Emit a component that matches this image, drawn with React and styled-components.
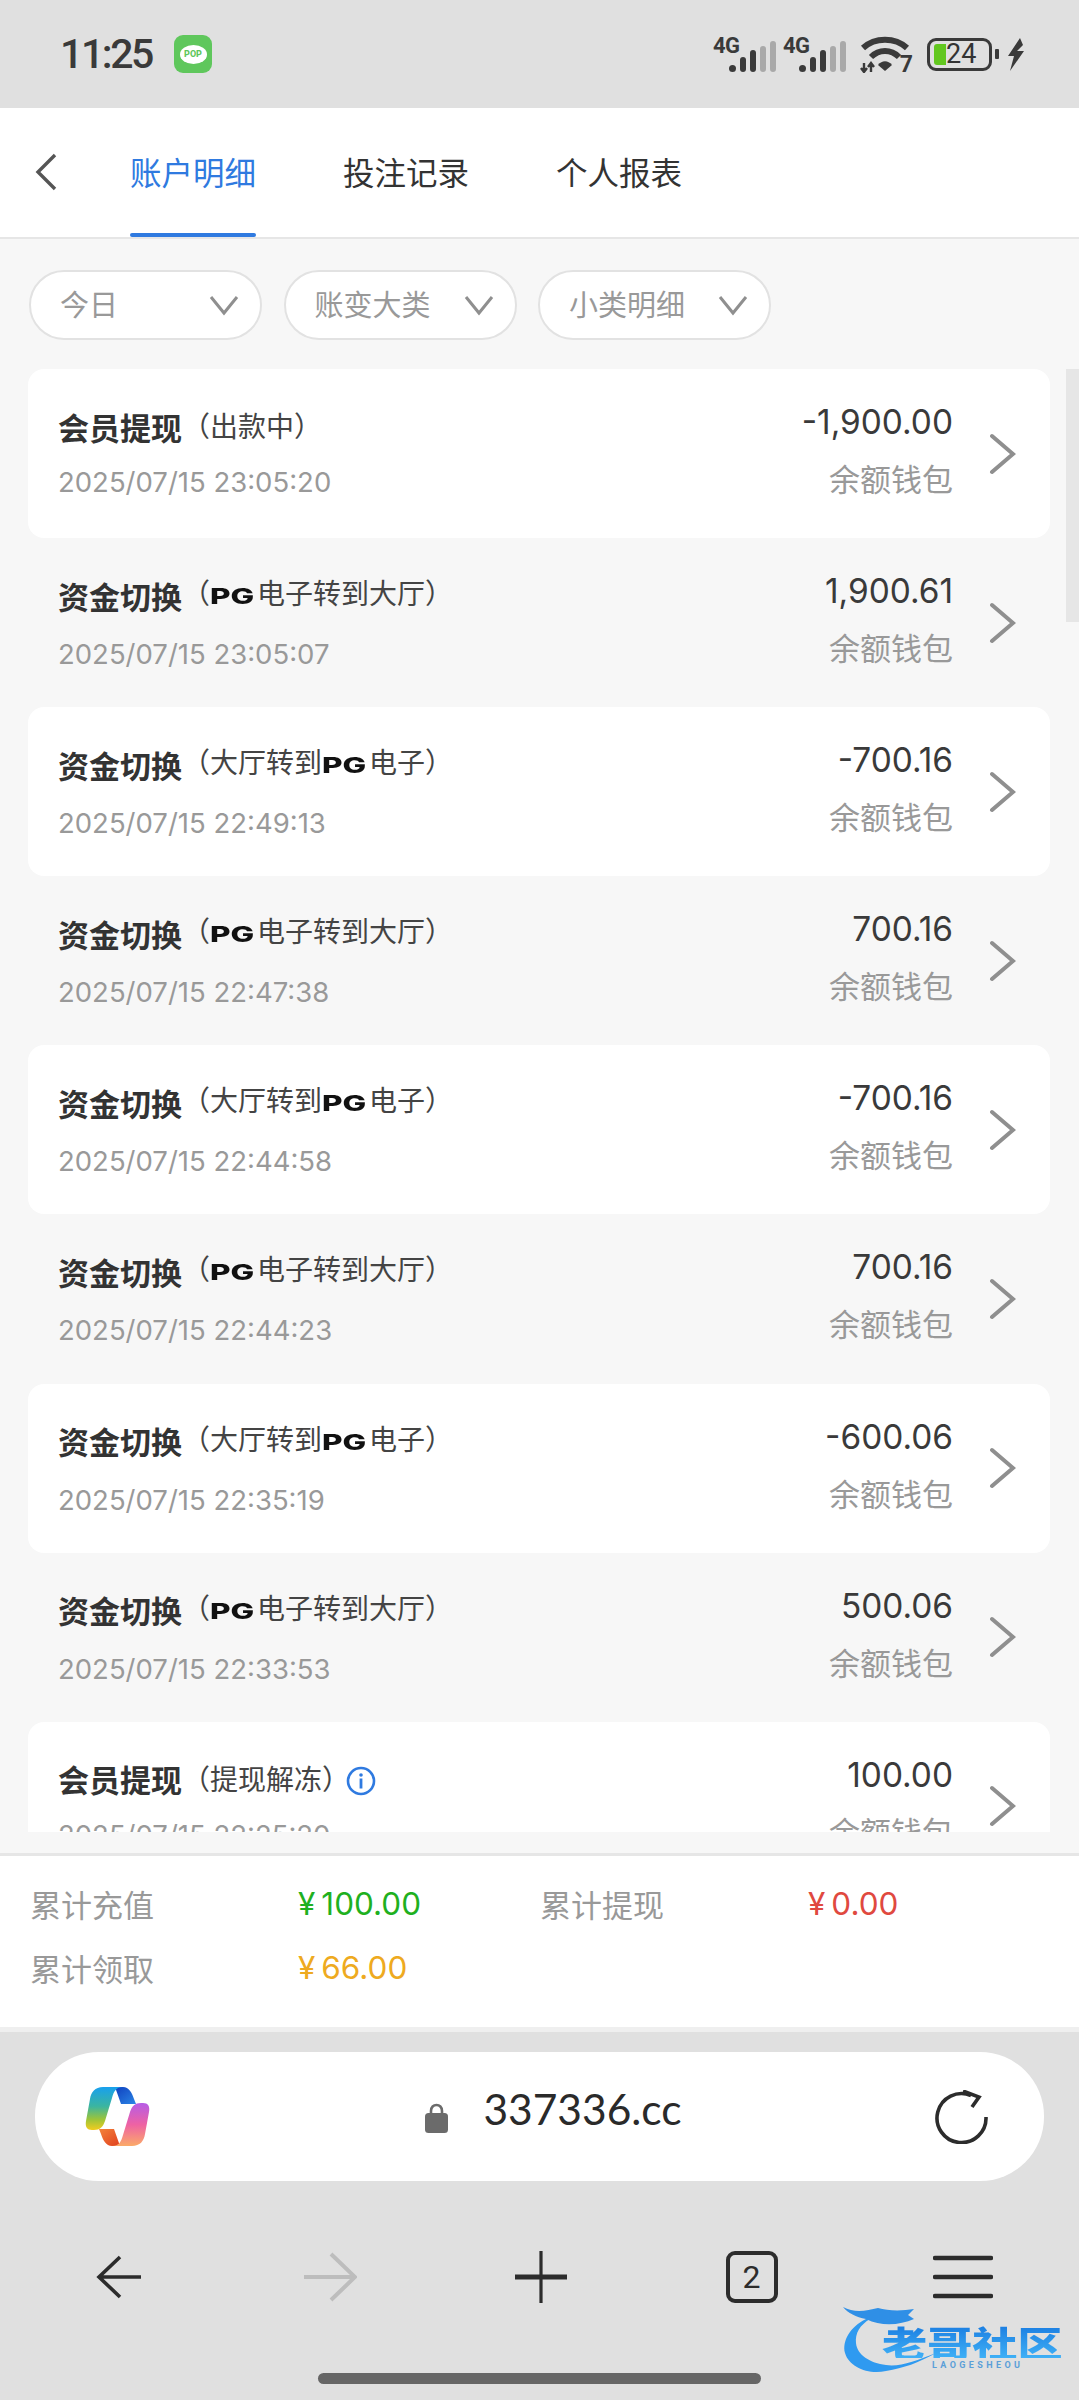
import React from "react";
import styled, { createGlobalStyle } from "styled-components";

const CJK = `"Noto Sans CJK SC", "Noto Sans", sans-serif`;
const LATIN = `Inter, "Noto Sans CJK SC", sans-serif`;

const Global = createGlobalStyle`
  html, body { margin: 0; padding: 0; background: #e0e0e0; }
  * { box-sizing: border-box; }
`;

const Screen = styled.div`
  position: relative;
  width: 1079px;
  height: 2400px;
  display: flex;
  flex-direction: column;
  overflow: hidden;
  font-family: ${CJK};
  background: #f7f7f7;
`;

/* status bar */
const StatusBar = styled.div`
  height: 108px;
  flex: none;
  background: #e0e0e0;
  display: flex;
  align-items: center;
  padding: 22px 54px 22px 60px;
  color: #3a3a3a;
`;
const Clock = styled.span`
  font-family: Roboto, sans-serif;
  font-size: 41px;
  font-weight: 500;
  width: 114px;
  letter-spacing: -2.4px;
`;
const PopBadge = styled.div`
  width: 38px;
  height: 38px;
  border-radius: 9px;
  background: #5fc75c;
  display: flex;
  align-items: center;
  justify-content: center;
  position: relative;
`;
const PopBubble = styled.span`
  width: 27px;
  height: 19px;
  border-radius: 50%;
  background: #fff;
  color: #5fc75c;
  font: 800 9px Roboto, sans-serif;
  display: flex;
  align-items: center;
  justify-content: center;
`;
const StatusIcons = styled.div`
  margin-left: auto;
  display: flex;
  align-items: center;
  height: 40px;
`;
const SignalWrap = styled.div`
  position: relative;
  width: 70px;
  height: 36px;
`;
const SignalLabel = styled.span`
  position: absolute;
  left: 0;
  top: -3px;
  font: 700 22px Roboto, sans-serif;
  letter-spacing: -0.5px;
  color: #3a3a3a;
`;
const SignalBars = styled.svg`
  position: absolute;
  right: 6px;
  bottom: 0;
`;
const WifiWrap = styled.div`
  width: 50px;
  height: 38px;
  margin-left: 7px;
  position: relative;
`;
const WifiSeven = styled.span`
  position: absolute;
  right: -3px;
  bottom: -5px;
  font: 700 23px Roboto, sans-serif;
`;
const Battery = styled.div`
  margin-left: 17px;
  width: 65px;
  height: 33px;
  border: 3px solid #3a3a3a;
  border-radius: 9px;
  display: flex;
  align-items: center;
  padding-left: 4px;
  font: 400 27px Roboto, sans-serif;
  color: #333;
  position: relative;
`;
const BatteryFill = styled.span`
  width: 12px;
  height: 21px;
  background: #62c71f;
  border-radius: 3px 0 0 3px;
  margin-right: 0;
`;
const BatteryNub = styled.span`
  width: 4px;
  height: 10px;
  margin-left: 3px;
  border-radius: 1px;
  background: #3a3a3a;
`;
const Bolt = styled.svg`
  margin-left: 8px;
`;

/* page header with tabs */
const Header = styled.header`
  flex: none;
  height: 131px;
  background: #fff;
  border-bottom: 2px solid #e6e6e6;
  display: flex;
  align-items: stretch;
  padding-left: 34px;
`;
const BackBtn = styled.svg`
  align-self: center;
  margin-top: -1px;
  margin-right: 72px;
`;
const Tab = styled.div`
  position: relative;
  margin-right: 87px;
  padding-top: 41px;
  font-size: 31.5px;
  line-height: 44px;
  color: ${(p) => (p.$active ? "#2f7ae0" : "#333")};
  &::after {
    content: "";
    display: ${(p) => (p.$active ? "block" : "none")};
    position: absolute;
    left: 0;
    right: 0;
    bottom: 0;
    height: 4px;
    border-radius: 2px;
    background: #2f7ae0;
  }
`;

/* filter pills */
const Filters = styled.div`
  flex: none;
  height: 130px;
  display: flex;
  gap: 21.5px;
  padding: 31px 0 0 29px;
`;
const Pill = styled.div`
  width: 233px;
  height: 70px;
  border: 2px solid #e2e2e2;
  border-radius: 35px;
  background: #fff;
  display: flex;
  align-items: center;
  justify-content: space-between;
  padding: 0 20px 4px 29px;
  font-size: 29px;
  color: #999;
`;
const PillCaret = styled.svg`
  margin-top: 4px;
`;

/* statement list */
const List = styled.div`
  position: relative;
  flex: 1;
  min-height: 0;
  overflow: hidden;
  margin-bottom: 21px;
`;
const Track = styled.div`
  position: absolute;
  top: 0;
  right: 0;
  width: 13px;
  height: 253px;
  background: #e6e6e6;
`;
const Row = styled.div`
  height: 169.1px;
  margin: 0 29px 0 28px;
  border-radius: 16px;
  background: ${(p) => (p.$alt ? "#fff" : "transparent")};
  display: flex;
  align-items: flex-start;
  padding: 0 34px 0 30px;
`;
const RowLeft = styled.div`
  flex: 1;
  padding-top: 36px;
`;
const TitleLine = styled.div`
  display: flex;
  align-items: center;
  height: 42px;
  white-space: nowrap;
`;
const Title = styled.span`
  font-size: 31px;
  font-weight: 700;
  color: #333;
`;
const Sub = styled.span`
  font-size: 28px;
  color: #444;
  display: inline-flex;
  align-items: center;
  margin-top: ${(p) => (p.$logo ? "-6px" : "-2px")};
`;
const PgMark = styled.span`
  display: inline-block;
  width: 45px;
  font: 800 21px/1 Inter, sans-serif;
  color: #111;
  letter-spacing: 0;
  transform: scaleX(1.5);
  transform-origin: left center;
  margin-top: 9px;
  margin-right: 2px;
  white-space: nowrap;
`;
const Info = styled.svg`
  margin-left: -4px;
  margin-top: 4px;
`;
const DateText = styled.div`
  margin-top: ${(p) => (p.$low ? "19px" : "16px")};
  font-family: ${LATIN};
  font-size: 27.5px;
  line-height: 38px;
  color: #999;
`;
const RowRight = styled.div`
  display: flex;
  flex-direction: column;
  align-items: flex-end;
  padding-top: 32px;
`;
const Amount = styled.div`
  font-family: ${LATIN};
  font-size: 33.4px;
  line-height: 42px;
  color: #3a3a3a;
`;
const Wallet = styled.div`
  margin-top: 15px;
  font-size: 31px;
  line-height: 40px;
  color: #999;
`;
const Chevron = styled.svg`
  align-self: center;
  margin-left: 35px;
`;

/* totals footer */
const Totals = styled.div`
  flex: none;
  height: 174px;
  background: #fff;
  border-top: 3px solid #e6e6e6;
  display: grid;
  grid-template-columns: 268px 242px 268px 1fr;
  grid-auto-rows: 64px;
  padding: 15px 0 0 30px;
  align-items: center;
`;
const TotalLabel = styled.span`
  font-size: 31px;
  color: #999;
`;
const TotalValue = styled.span`
  font-family: ${LATIN};
  font-size: 31.5px;
  color: ${(p) => p.$color};
`;
const Yen = styled.span`
  margin-right: 6px;
`;

/* browser chrome */
const Chrome = styled.div`
  flex: none;
  height: 373px;
  background: #e0e0e0;
  border-top: 5px solid #efefef;
  padding: 20px 35px 0;
  display: flex;
  flex-direction: column;
`;
const UrlBar = styled.div`
  position: relative;
  height: 129px;
  border-radius: 64px;
  background: #fff;
  display: flex;
  align-items: center;
  justify-content: space-between;
  padding: 0 55px 0 50px;
`;
const UrlCenter = styled.div`
  display: flex;
  align-items: flex-start;
  gap: 35px;
  margin-left: 22px;
  margin-top: -10px;
`;
const LockIcon = styled.svg`
  margin-top: 12px;
`;
const UrlText = styled.span`
  font-family: Lato, sans-serif;
  font-size: 42.5px;
  line-height: 36px;
  color: #2a2a2a;
`;
const Toolbar = styled.div`
  display: grid;
  grid-template-columns: repeat(5, 211px);
  margin: 68px 0 0 -22px;
  justify-items: center;
  align-items: center;
  height: 56px;
`;
const TabCount = styled.div`
  width: 52px;
  height: 52px;
  border: 4px solid #2c2c2c;
  border-radius: 9px;
  display: flex;
  align-items: center;
  justify-content: center;
  font: 400 32px Roboto, sans-serif;
  color: #2c2c2c;
`;
const HomeBar = styled.div`
  width: 443px;
  height: 11px;
  border-radius: 6px;
  background: #666;
  margin: 68px 0 0 283px;
`;

/* community watermark over the toolbar */
const Mark = styled.div`
  position: absolute;
  left: 842px;
  top: 2305px;
  width: 222px;
  height: 70px;
`;
const MarkName = styled.span`
  position: absolute;
  left: 40px;
  top: 21px;
  font: 900 35px/32px ${CJK};
  letter-spacing: 0;
  white-space: nowrap;
  transform: scaleX(1.29);
  transform-origin: left center;
  background: linear-gradient(#1c7fe2, #3fb0f6);
  -webkit-background-clip: text;
  background-clip: text;
  color: transparent;
`;
const MarkSub = styled.span`
  position: absolute;
  left: 90px;
  top: 55px;
  font: 700 9px/10px Roboto, sans-serif;
  letter-spacing: 3.4px;
  color: #5b9fd8;
`;

const Signal = () => (
  <SignalBars width="48" height="31" viewBox="0 0 48 31">
    <rect x="0" y="24" width="7" height="7" rx="3.5" fill="#3a3a3a" />
    <rect x="11" y="16" width="6" height="15" rx="3" fill="#3a3a3a" />
    <rect x="21" y="9" width="6" height="22" rx="3" fill="#3a3a3a" />
    <rect x="31" y="5" width="6" height="26" rx="3" fill="#a9a9a9" />
    <rect x="41" y="0" width="6" height="31" rx="3" fill="#a9a9a9" />
  </SignalBars>
);

const Wifi = () => (
  <svg width="50" height="38" viewBox="0 0 50 38" fill="none">
    <path d="M3 13C15 2 35 2 47 13" stroke="#3a3a3a" strokeWidth="6" />
    <path d="M11 22C19 14 31 14 39 22" stroke="#3a3a3a" strokeWidth="6" />
    <path d="M18 30C22 25 28 25 32 30L25 36Z" fill="#3a3a3a" />
    <path d="M4 28V37M1 33L4 37L7 33M11 37V28M8 32L11 28L14 32" stroke="#3a3a3a" strokeWidth="2.4" />
  </svg>
);

const Copilot = () => (
  <svg width="65" height="60" viewBox="0 0 65 60">
    <defs>
      <linearGradient id="cpLeft" x1="0" y1="0" x2="0" y2="1">
        <stop offset="0" stopColor="#18a0ee" />
        <stop offset="0.45" stopColor="#3bb5a0" />
        <stop offset="0.75" stopColor="#9cc43a" />
        <stop offset="1" stopColor="#f2cc1e" />
      </linearGradient>
      <linearGradient id="cpRight" x1="0" y1="0" x2="0" y2="1">
        <stop offset="0" stopColor="#b65ce6" />
        <stop offset="0.5" stopColor="#ee62a4" />
        <stop offset="1" stopColor="#fbaa68" />
      </linearGradient>
      <linearGradient id="cpTop" x1="0" y1="0" x2="1" y2="1">
        <stop offset="0" stopColor="#0f3fbe" />
        <stop offset="1" stopColor="#2b86e6" />
      </linearGradient>
      <linearGradient id="cpBottom" x1="0" y1="0" x2="1" y2="1">
        <stop offset="0" stopColor="#f4833a" />
        <stop offset="1" stopColor="#e0401f" />
      </linearGradient>
    </defs>
    <path d="M30 0H38C44 0 47 6 49 12L51 17H36Z" fill="url(#cpTop)" />
    <path d="M35 59H27C21 59 18 53 16 47L14 42H29Z" fill="url(#cpBottom)" />
    <path d="M18 0H38C31 0 29 4 27 11L20 34C18 40 15 43 9 43H7C2 43 0 40 1 34L5 12C6 5 10 0 18 0Z" fill="url(#cpLeft)" />
    <path d="M47 59H27C34 59 36 55 38 48L45 25C47 19 50 16 56 16H58C63 16 65 19 64 25L60 47C59 54 55 59 47 59Z" fill="url(#cpRight)" />
  </svg>
);

const rows = [
  { t: "会员提现", s: "出款中", d: "2025/07/15 23:05:20", a: "-1,900.00" },
  { t: "资金切换", pg: "from", d: "2025/07/15 23:05:07", a: "1,900.61" },
  { t: "资金切换", pg: "to", d: "2025/07/15 22:49:13", a: "-700.16" },
  { t: "资金切换", pg: "from", d: "2025/07/15 22:47:38", a: "700.16" },
  { t: "资金切换", pg: "to", d: "2025/07/15 22:44:58", a: "-700.16" },
  { t: "资金切换", pg: "from", d: "2025/07/15 22:44:23", a: "700.16" },
  { t: "资金切换", pg: "to", d: "2025/07/15 22:35:19", a: "-600.06" },
  { t: "资金切换", pg: "from", d: "2025/07/15 22:33:53", a: "500.06" },
  { t: "会员提现", s: "提现解冻", info: true, d: "2025/07/15 22:25:20", a: "100.00" },
];

const Detail = ({ row }) => {
  if (row.pg === "from")
    return (
      <Sub $logo>
        （<PgMark>PG</PgMark>电子转到大厅）
      </Sub>
    );
  if (row.pg === "to")
    return (
      <Sub $logo>
        （大厅转到<PgMark>PG</PgMark>电子）
      </Sub>
    );
  return <Sub>（{row.s}）</Sub>;
};

const ChevronDown = () => (
  <PillCaret width="32" height="22" viewBox="0 0 32 22" fill="none">
    <path d="M3 3L16 19L29 3" stroke="#8f8f8f" strokeWidth="3" />
  </PillCaret>
);

export default function App() {
  return (
    <>
      <Global />
      <Screen>
        <StatusBar>
          <Clock>11:25</Clock>
          <PopBadge>
            <PopBubble>POP</PopBubble>
          </PopBadge>
          <StatusIcons>
            <SignalWrap>
              <SignalLabel>4G</SignalLabel>
              <Signal />
            </SignalWrap>
            <SignalWrap>
              <SignalLabel>4G</SignalLabel>
              <Signal />
            </SignalWrap>
            <WifiWrap>
              <Wifi />
              <WifiSeven>7</WifiSeven>
            </WifiWrap>
            <Battery>
              <BatteryFill />
              24
            </Battery>
            <BatteryNub />
            <Bolt width="18" height="33" viewBox="0 0 18 33">
              <path d="M13 0L1 18H7L3 33L17 13H10L16 7Z" fill="#3a3a3a" />
            </Bolt>
          </StatusIcons>
        </StatusBar>

        <Header>
          <BackBtn width="24" height="38" viewBox="0 0 24 38" fill="none">
            <path d="M21 2L4 19L21 36" stroke="#555" strokeWidth="3.4" />
          </BackBtn>
          <Tab $active>账户明细</Tab>
          <Tab>投注记录</Tab>
          <Tab>个人报表</Tab>
        </Header>

        <Filters>
          <Pill>
            今日
            <ChevronDown />
          </Pill>
          <Pill>
            账变大类
            <ChevronDown />
          </Pill>
          <Pill>
            小类明细
            <ChevronDown />
          </Pill>
        </Filters>

        <List>
          <Track />
          {rows.map((r, i) => (
            <Row key={r.d} $alt={i % 2 === 0}>
              <RowLeft>
                <TitleLine>
                  <Title>{r.t}</Title>
                  <Detail row={r} />
                  {r.info && (
                    <Info width="30" height="30" viewBox="0 0 30 30" fill="none">
                      <circle cx="15" cy="15" r="13" stroke="#2f7ae0" strokeWidth="2.6" />
                      <circle cx="15" cy="9" r="1.8" fill="#2f7ae0" />
                      <rect x="13.6" y="12.5" width="2.8" height="10" fill="#2f7ae0" />
                    </Info>
                  )}
                </TitleLine>
                <DateText $low={Boolean(r.pg)}>{r.d}</DateText>
              </RowLeft>
              <RowRight>
                <Amount>{r.a}</Amount>
                <Wallet>余额钱包</Wallet>
              </RowRight>
              <Chevron width="28" height="44" viewBox="0 0 28 44" fill="none">
                <path d="M4 4L25 22L4 40" stroke="#8f8f8f" strokeWidth="4" strokeLinecap="round" />
              </Chevron>
            </Row>
          ))}
        </List>

        <Totals>
          <TotalLabel>累计充值</TotalLabel>
          <TotalValue $color="#1fb01f"><Yen>¥</Yen>100.00</TotalValue>
          <TotalLabel>累计提现</TotalLabel>
          <TotalValue $color="#e0493f"><Yen>¥</Yen>0.00</TotalValue>
          <TotalLabel>累计领取</TotalLabel>
          <TotalValue $color="#eeaa20"><Yen>¥</Yen>66.00</TotalValue>
        </Totals>

        <Chrome>
          <UrlBar>
            <Copilot />
            <UrlCenter>
              <LockIcon width="23" height="30" viewBox="0 0 23 30" fill="none">
                <path d="M6 13V8C6 4 8.5 2 11.5 2S17 4 17 8V13" stroke="#6b6b6b" strokeWidth="2.6" />
                <rect x="0" y="10" width="23" height="20" rx="3.5" fill="#6b6b6b" />
              </LockIcon>
              <UrlText>337336.cc</UrlText>
            </UrlCenter>
            <svg width="54" height="54" viewBox="0 0 54 54" fill="none">
              <path d="M36 5.5A24.5 24.5 0 1 0 51 27" stroke="#2c2c2c" strokeWidth="3.6" />
              <path d="M28 1L44 7L37 17" stroke="#2c2c2c" strokeWidth="3.6" />
            </svg>
          </UrlBar>
          <Toolbar>
            <svg width="46" height="44" viewBox="0 0 46 44" fill="none">
              <path d="M24 2L3 22L24 42M3 22H45" stroke="#2c2c2c" strokeWidth="3.6" />
            </svg>
            <svg width="54" height="50" viewBox="0 0 54 50" fill="none">
              <path d="M28 2L52 25L28 48M52 25H1" stroke="#bdbdbd" strokeWidth="4" />
            </svg>
            <svg width="52" height="52" viewBox="0 0 52 52" fill="none">
              <path d="M26 0V52" stroke="#2c2c2c" strokeWidth="3.2" />
              <path d="M0 26H52" stroke="#2c2c2c" strokeWidth="5" />
            </svg>
            <TabCount>2</TabCount>
            <svg width="60" height="44" viewBox="0 0 60 44" fill="none">
              <path d="M2 3H58M2 22H58M2 41H58" stroke="#2c2c2c" strokeWidth="4.4" strokeLinecap="round" />
            </svg>
          </Toolbar>
          <HomeBar />
        </Chrome>

        <Mark>
          <svg width="110" height="70" viewBox="0 0 110 70">
            <path
              d="M24 14C8 22 0 36 3 48C7 62 26 70 44 66C62 63 76 58 94 48C74 56 58 62 44 60C28 58 15 50 14 38C13 28 18 20 28 14Z"
              fill="#2f9af0"
            />
            <path d="M1 2C12 8 24 6 36 3C46 6 60 6 72 4L66 10L72 14C58 20 40 22 24 14C14 12 6 8 1 2Z" fill="#2f8fe6" />
          </svg>
          <MarkName>老哥社区</MarkName>
          <MarkSub>LAOGESHEOU</MarkSub>
        </Mark>
      </Screen>
    </>
  );
}
